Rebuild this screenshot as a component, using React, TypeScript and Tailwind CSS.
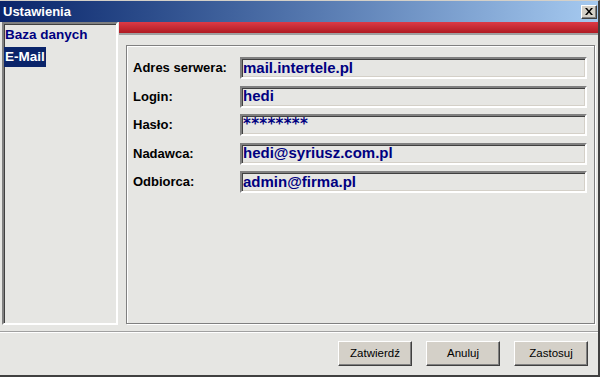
const FIELDS: { label: string; value: string; secret?: boolean }[] = [
  { label: "Adres serwera:", value: "mail.intertele.pl" },
  { label: "Login:", value: "hedi" },
  { label: "Hasło:", value: "********", secret: true },
  { label: "Nadawca:", value: "hedi@syriusz.com.pl" },
  { label: "Odbiorca:", value: "admin@firma.pl" },
];

const BUTTONS = ["Zatwierdź", "Anuluj", "Zastosuj"];

function CloseButton() {
  return (
    <div className="flex h-[14px] w-[16px] items-center justify-center border border-t-white border-l-white border-r-[#404040] border-b-[#404040] bg-[#d4d0c8] shadow-[inset_-1px_-1px_0_#808080]">
      <svg width="8" height="7" viewBox="0 0 8 7">
        <path d="M0 0h2l2 2.5L6 0h2L5 3.5 8 7H6L4 4.5 2 7H0l3-3.5z" fill="#000" />
      </svg>
    </div>
  );
}

export default function App() {
  return (
    <div className="flex h-[377px] w-[600px] flex-col border-t border-r-2 border-b-2 border-t-[#d4d0c8] border-r-[#404040] border-b-[#404040] bg-[#e6e6e3] font-['Liberation_Sans',sans-serif]">
      {/* Title bar */}
      <div className="flex h-[21px] items-center justify-between bg-gradient-to-r from-[#0a246a] to-[#a6caf0] pl-[3px] pr-[1px]">
        <span className="text-[13px] font-bold leading-none text-white">Ustawienia</span>
        <CloseButton />
      </div>

      {/* Content */}
      <div className="flex h-[303px] pl-[2px]">
        {/* Tree */}
        <div className="flex w-[116px] flex-col gap-[2px] border-2 border-t-[#808080] border-l-[#808080] border-r-white border-b-white pt-[1px] shadow-[inset_1px_1px_0_#404040]">
          <div className="flex h-[20px] items-center pl-[1px] text-[13.5px] font-bold text-[#000080]">
            Baza danych
          </div>
          <div className="flex h-[20px] w-fit items-center bg-[#0a246a] px-[1px] text-[13.5px] font-bold text-white">
            E-Mail
          </div>
        </div>

        <div className="flex flex-1 flex-col pl-[1px]">
          <div className="h-[13px] border-b-2 border-b-[#a0a0a0] bg-gradient-to-b from-[#dc3a46] to-[#b01a22]" />
          <div className="flex flex-1 pt-[10px] pl-[7px] pr-[3px] pb-[1px]">
            <div className="flex flex-1 flex-col gap-[6.5px] border border-[#808080] pt-[11px] pl-[6px] pr-[7px] shadow-[inset_1px_1px_0_#fff,1px_1px_0_#fff]">
              {FIELDS.map((f) => (
                <div key={f.label} className="flex h-[22px] items-center">
                  <span className="w-[107px] text-[13px] font-bold text-black">{f.label}</span>
                  <div className="flex h-[22px] flex-1 items-center border-2 border-t-[#808080] border-l-[#808080] border-r-white border-b-white pl-[1px] font-bold text-[#000080] shadow-[inset_1px_1px_0_#404040,inset_-1px_-1px_0_#d4d0c8]">
                    {f.secret ? (
                      <span className="-mt-[1px] font-['DejaVu_Sans',sans-serif] text-[15px] tracking-[0.3px]">
                        {f.value}
                      </span>
                    ) : (
                      <span className="text-[15px]">{f.value}</span>
                    )}
                  </div>
                </div>
              ))}
            </div>
          </div>
        </div>
      </div>

      {/* Divider */}
      <div className="mt-[6px] h-[2px] border-t border-t-[#a0a0a0] border-b border-b-white" />

      {/* Buttons */}
      <div className="flex justify-end gap-[14px] pt-[8px] pr-[10px]">
        {BUTTONS.map((b) => (
          <button
            key={b}
            className="flex h-[25px] w-[74px] items-center justify-center border border-t-white border-l-white border-r-[#404040] border-b-[#404040] bg-[#d4d0c8] text-[11.5px] text-black shadow-[inset_-1px_-1px_0_#808080]"
          >
            {b}
          </button>
        ))}
      </div>
    </div>
  );
}
